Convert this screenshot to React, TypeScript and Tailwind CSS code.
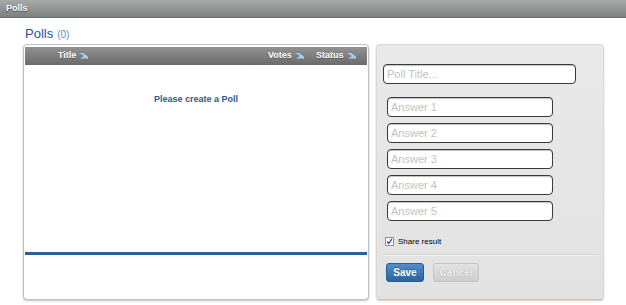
import React from "react";

function SortIcon() {
  return (
    <svg width="10" height="6" viewBox="0 0 10 6" className="ml-[3px] inline-block">
      <path d="M0 0 L4 0 L9 3.5 L9 5.5 L1 5.5 L5 3 Z" fill="#9fd0f5" />
    </svg>
  );
}

function Input({ placeholder, className }: { placeholder: string; className: string }) {
  return (
    <div
      className={
        "h-[20px] rounded-[4px] border border-[#3a3a3a] bg-white pl-[3px] flex items-center text-[11px] text-[#c2c2c2] shadow-[inset_0_1px_1px_rgba(0,0,0,0.25)] " +
        className
      }
    >
      {placeholder}
    </div>
  );
}

export default function App() {
  return (
    <div className="w-[626px] h-[305px] bg-white overflow-hidden" style={{ fontFamily: '"Liberation Sans", Arial, sans-serif' }}>
      <div className="h-[18px] bg-gradient-to-b from-[#a6aaa9] to-[#7c807f] border-b border-[#6a6e6d] flex items-center pl-[6px]">
        <span className="text-[9px] font-bold text-white [text-shadow:0_1px_1px_rgba(0,0,0,0.5)]">Polls</span>
      </div>
      <div className="pl-[23px]">
        <div className="h-[26px] flex items-end pb-[4px] pl-[2px]">
          <span className="text-[13px] text-[#1f5494] leading-none">Polls</span>
          <span className="text-[10px] text-[#5b8fcf] ml-[4px] leading-none">(0)</span>
        </div>
        <div className="flex gap-[7px]">
          <div className="w-[346px] h-[256px] rounded-[4px] border border-[#b9c1c9] bg-white shadow-[0_1px_2px_rgba(0,0,0,0.25)] px-[1px] pt-[2px] flex flex-col">
            <div className="h-[18px] bg-gradient-to-b from-[#929292] to-[#6b6b6b] flex items-center text-[9px] font-bold text-white [text-shadow:0_1px_0_rgba(0,0,0,0.3)]">
              <div className="pl-[33px] flex items-center flex-1">
                Title
                <SortIcon />
              </div>
              <div className="flex items-center w-[48px]">
                Votes
                <SortIcon />
              </div>
              <div className="flex items-center w-[51px]">
                Status
                <SortIcon />
              </div>
            </div>
            <div className="h-[187px] flex justify-center pt-[28px]">
              <span className="text-[9px] font-bold text-[#2a5a99]">Please create a Poll</span>
            </div>
            <div className="h-[3px] bg-[#2b5f99]" />
            <div className="flex-1" />
          </div>
          <div className="w-[228px] h-[256px] rounded-[4px] bg-gradient-to-b from-[#e9e9e9] to-[#e2e2e2] border border-[#d8d8d8] border-b-[#aac6e0] shadow-[0_1px_2px_rgba(0,0,0,0.2)] pl-[6px] pt-[19px] flex flex-col">
            <Input placeholder="Poll Title..." className="w-[193px]" />
            <div className="pl-[4px] pt-[13px] flex flex-col gap-[6px]">
              <Input placeholder="Answer 1" className="w-[166px]" />
              <Input placeholder="Answer 2" className="w-[166px]" />
              <Input placeholder="Answer 3" className="w-[166px]" />
              <Input placeholder="Answer 4" className="w-[166px]" />
              <Input placeholder="Answer 5" className="w-[166px]" />
            </div>
            <div className="flex items-center pl-[2px] mt-[16px] h-[9px]">
              <div className="w-[9px] h-[9px] border border-[#8a8f99] bg-white flex items-center justify-center">
                <svg width="7" height="7" viewBox="0 0 7 7">
                  <path d="M1 3.5 L2.8 5.5 L6 0.8" stroke="#2a3f8f" strokeWidth="1.2" fill="none" />
                </svg>
              </div>
              <span className="ml-[4px] text-[8px] text-black">Share result</span>
            </div>
            <div className="mt-[8px] mr-[7px] h-[2px] border-t border-[#d2d5d9] border-b border-b-[#f2f2f2]" />
            <div className="flex gap-[9px] pl-[3px] mt-[7px]">
              <div className="w-[38px] h-[19px] rounded-[3px] bg-gradient-to-b from-[#5190cb] to-[#2c639f] border border-[#2a5c94] flex items-center justify-center text-[10px] font-bold text-white [text-shadow:0_-1px_0_rgba(0,0,0,0.3)]">
                Save
              </div>
              <div className="w-[46px] h-[19px] rounded-[3px] bg-gradient-to-b from-[#e2e2e2] to-[#cdcdcd] border border-[#c4c4c4] flex items-center justify-center text-[10px] font-bold text-[#f4f4f4] [text-shadow:0_0_1px_rgba(0,0,0,0.35)]">
                Cancel
              </div>
            </div>
          </div>
        </div>
      </div>
    </div>
  );
}
